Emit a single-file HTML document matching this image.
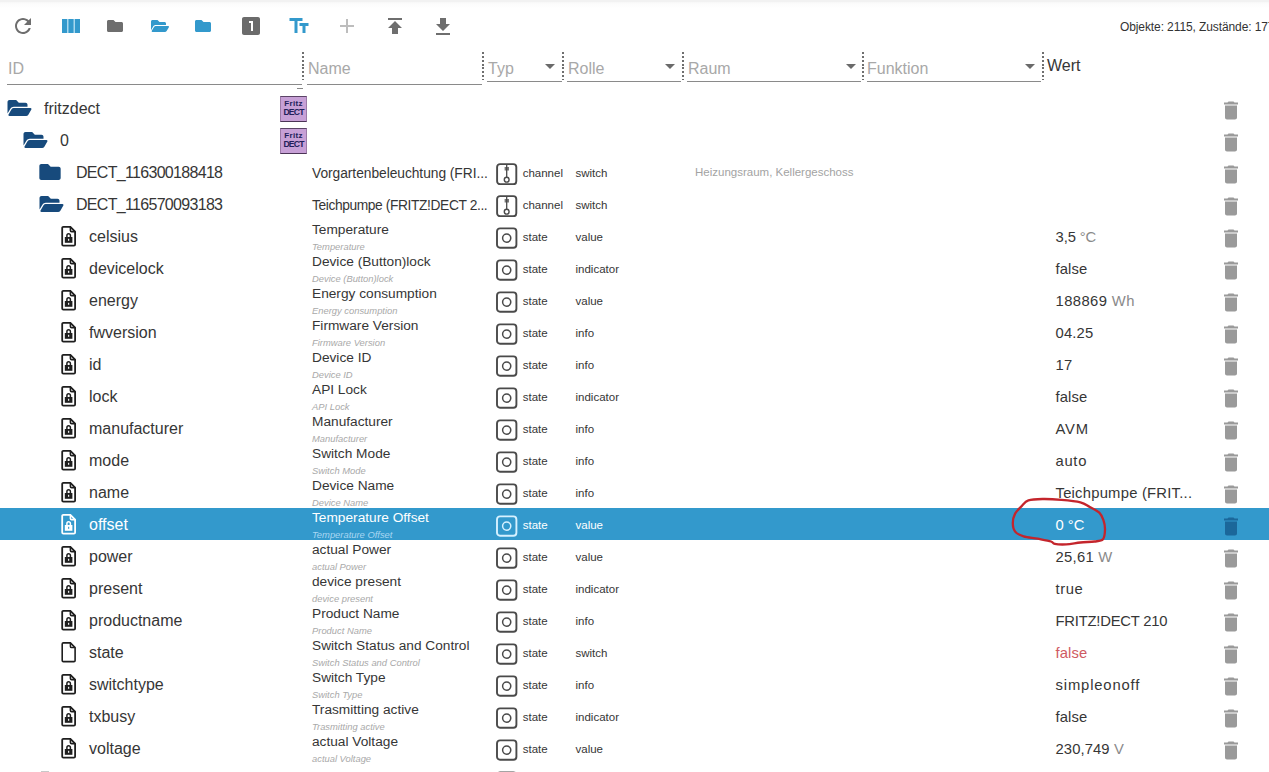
<!DOCTYPE html>
<html><head><meta charset="utf-8"><style>
*{box-sizing:border-box}
html,body{margin:0;padding:0}
body{width:1269px;height:772px;overflow:hidden;background:#fff;position:relative;font-family:"Liberation Sans",sans-serif;color:#222}
.topsh{position:absolute;left:0;top:0;width:1269px;height:8px;background:linear-gradient(#f2f2f2 0,#f2f2f2 1.6px,#f9f9f9 2.6px,#fcfcfc 4px,#fdfdfd 6px,#fff 8px)}
.tb{position:absolute}
.stats{position:absolute;left:1120px;top:19.5px;font-size:12px;color:#333;white-space:nowrap;letter-spacing:-0.1px}
.flt{position:absolute;top:52px;height:33px;border-bottom:1px solid #8a8a8a}
.flt.s{height:30px}
.ph{position:absolute;font-size:16px;color:#a8a8a8;white-space:nowrap;top:60px}
.sep{position:absolute;top:52px;width:2px;height:28px;background:repeating-linear-gradient(#6f6f6f 0 2px,transparent 2px 3.85px)}
.arr{position:absolute;top:64px;width:0;height:0;border-left:5px solid transparent;border-right:5px solid transparent;border-top:5px solid #6a6a6a}
.wertH{position:absolute;left:1047px;top:57px;font-size:16px;color:#363636}
.row{position:absolute;left:0;width:1269px;height:32px}
.row.sel{background:#3399cc;color:#fff}
.ic{position:absolute}
.folder{fill:#174a7c}
.file{color:#1e1e1e}
.sel .file{color:#fff;--kh:#3399cc}
.idt{position:absolute;top:7px;font-size:16px;line-height:20px;white-space:nowrap;color:#363636}
.sel .idt{color:#fff}
.fritz{position:absolute;left:280px;top:4px;width:27px;height:26px;background:#c7a0d6;border-top:1px solid #5b4466;border-bottom:1.5px solid #4b3456;border-left:1px solid #9c7aa8;border-right:1px solid #9c7aa8;font-family:"Liberation Sans",sans-serif;font-weight:bold;font-size:8px;line-height:8px;color:#22205a;text-align:center}
.fritz span{position:absolute;left:0;width:25px;display:block}.fritz .f1{top:3.2px;letter-spacing:0.3px}.fritz .f2{top:11px;font-size:8.6px;letter-spacing:-0.8px}
.nm{position:absolute;left:312px;top:2px;font-size:13.7px;line-height:16px;white-space:nowrap;color:#363636}
.nm1{position:absolute;left:312px;top:10px;font-size:13.8px;line-height:16px;white-space:nowrap;color:#363636}
.sub{position:absolute;left:312px;top:21px;font-size:9.4px;line-height:11px;font-style:italic;white-space:nowrap;color:#a9a9a9}
.sel .nm{color:#fff}
.sel .sub{color:#a9d7f2}
.tbox{left:495px;top:6px;color:#4a4a4a}
.sel .tbox{color:#d6f1ff}
.typ{position:absolute;left:522.7px;top:10px;font-size:11.5px;line-height:14px;white-space:nowrap;color:#363636}
.rol{position:absolute;left:575.5px;top:10px;font-size:11.5px;line-height:14px;white-space:nowrap;color:#363636}
.sel .typ,.sel .rol{color:#fff}
.raum{position:absolute;left:695px;top:10px;font-size:11.5px;line-height:13px;white-space:nowrap;color:#a3a3a3}
.wert{position:absolute;left:1055.5px;top:8px;font-size:14.8px;line-height:18px;white-space:nowrap;color:#363636}
.wert .unit{color:#8a8a8a}
.sel .wert,.sel .wert .unit{color:#fff}
.wert.red{color:#cf5a62}
.trash{left:1224px;top:9px;fill:#9a9a9a}
.sel .trash{fill:#1b679a}
.graymark{position:absolute;top:7px;width:8px;height:2px;background:#c8c8c8}

</style></head><body>
<svg width="0" height="0" style="position:absolute">
<defs>
<symbol id="fopen" viewBox="0 64 576 384"><path d="M572.694 292.093L500.27 416.248A63.997 63.997 0 0 1 444.989 448H45.025c-18.523 0-30.064-20.093-20.731-36.093l72.424-124.155A64 64 0 0 1 152 256h399.964c18.523 0 30.064 20.093 20.73 36.093zM152 224h328v-48c0-26.51-21.49-48-48-48H272l-64-64H48C21.49 64 0 85.49 0 112v278.046l69.077-118.418C86.214 242.25 117.989 224 152 224z"/></symbol>
<symbol id="fclosed" viewBox="0 64 512 384"><path d="M464 128H272l-64-64H48C21.49 64 0 85.49 0 112v288c0 26.51 21.49 48 48 48h416c26.51 0 48-21.49 48-48V176c0-26.51-21.49-48-48-48z"/></symbol>
<symbol id="lockf" viewBox="0 0 17 22"><path d="M2.2 3.1Q2.2 1.9 3.4 1.9H10.4L15.1 6.6V19.4Q15.1 20.6 13.9 20.6H3.4Q2.2 20.6 2.2 19.4Z" fill="none" stroke="currentColor" stroke-width="1.8"/><path d="M10.4 1.9V5.4Q10.4 6.6 11.6 6.6H15.1" fill="none" stroke="currentColor" stroke-width="1.6"/><path d="M6.9 12.2V10.4A1.75 1.75 0 0 1 10.4 10.4V12.2" fill="none" stroke="currentColor" stroke-width="1.5"/><rect x="4.8" y="12" width="7.6" height="5.8" fill="currentColor"/><rect x="8.1" y="13.8" width="1.1" height="2" fill="var(--kh,#fff)"/></symbol>
<symbol id="plainf" viewBox="0 0 17 22"><path d="M2.2 3.1Q2.2 1.9 3.4 1.9H10.4L15.1 6.6V19.4Q15.1 20.6 13.9 20.6H3.4Q2.2 20.6 2.2 19.4Z" fill="none" stroke="currentColor" stroke-width="1.6"/><path d="M10.4 1.9V5.4Q10.4 6.6 11.6 6.6H15.1" fill="none" stroke="currentColor" stroke-width="1.5"/></symbol>
<symbol id="stat" viewBox="0 0 23 23"><rect x="2" y="2.4" width="19.4" height="19.4" rx="3" fill="none" stroke="currentColor" stroke-width="1.9"/><circle cx="11.7" cy="12.1" r="4.1" fill="none" stroke="currentColor" stroke-width="1.5"/></symbol>
<symbol id="chan" viewBox="0 0 23 23"><rect x="2.1" y="2.1" width="19.2" height="20.2" rx="3" fill="none" stroke="currentColor" stroke-width="1.9"/><path d="M11.7 3V15.4" stroke="currentColor" stroke-width="1.3"/><rect x="9.6" y="5" width="4.4" height="3.5" fill="currentColor" opacity="0.75"/><circle cx="11.7" cy="17.7" r="2.4" fill="none" stroke="currentColor" stroke-width="1.4"/></symbol>
<symbol id="trash" viewBox="5 3 14 18"><path d="M6 19c0 1.1.9 2 2 2h8c1.1 0 2-.9 2-2V7H6v12zM19 4h-3.5l-1-1h-5l-1 1H5v2h14V4z"/></symbol>
</defs>
</svg>

<div class="topsh"></div>
<svg class="tb" style="left:11px;top:14px" width="24" height="24" viewBox="0 0 24 24"><path fill="#6e6e6e" d="M17.65 6.35C16.2 4.9 14.21 4 12 4c-4.42 0-7.99 3.58-7.99 8s3.57 8 7.99 8c3.73 0 6.84-2.55 7.73-6h-2.08c-.82 2.33-3.04 4-5.65 4-3.31 0-6-2.69-6-6s2.69-6 6-6c1.66 0 3.14.69 4.22 1.78L13 11h7V4l-2.35 2.35z"/></svg>
<svg class="tb" style="left:62px;top:19px" width="18" height="14" viewBox="0 0 18 14"><rect width="18" height="14" fill="#a9d8ef"/><rect x="0" y="0" width="5" height="14" fill="#3399cc"/><rect x="6.5" y="0" width="5" height="14" fill="#3399cc"/><rect x="13" y="0" width="5" height="14" fill="#3399cc"/></svg>
<svg class="tb" style="left:107px;top:20px" width="16" height="12" fill="#6e6e6e"><use href="#fclosed"/></svg>
<svg class="tb" style="left:151px;top:20px" width="18" height="12" fill="#3399cc"><use href="#fopen"/></svg>
<svg class="tb" style="left:195px;top:20px" width="16" height="12" fill="#3399cc"><use href="#fclosed"/></svg>
<svg class="tb" style="left:239px;top:14px" width="24" height="24" viewBox="0 0 24 24"><path fill="#6b6b6b" d="M19 3H5c-1.1 0-2 .9-2 2v14c0 1.1.9 2 2 2h14c1.1 0 2-.9 2-2V5c0-1.1-.9-2-2-2zm-5 14h-2V9h-2V7h4v10z"/></svg>
<svg class="tb" style="left:286.5px;top:14px" width="24" height="24" viewBox="0 0 24 24"><path fill="#3399cc" d="M2.5 4v3h5v12h3V7h5V4h-13zm19 5h-9v3h3v7h3v-7h3V9z"/></svg>
<svg class="tb" style="left:335px;top:14px" width="24" height="24" viewBox="0 0 24 24"><path fill="#bdbdbd" d="M19 13h-6v6h-2v-6H5v-2h6V5h2v6h6v2z"/></svg>
<svg class="tb" style="left:383px;top:14px" width="24" height="24" viewBox="0 0 24 24"><path fill="#6e6e6e" d="M5 4v2h14V4H5zm0 10h4v6h6v-6h4l-7-7-7 7z"/></svg>
<svg class="tb" style="left:431px;top:15px" width="24" height="24" viewBox="0 0 24 24"><path fill="#6e6e6e" d="M19 9h-4V3H9v6H5l7 7 7-7zM5 18v2h14v-2H5z"/></svg>
<div class="stats">Objekte: 2115, Zustände: 1777</div>
<div class="flt" style="left:7px;width:295px"></div><div class="ph" style="left:8px">ID</div>
<div class="sep" style="left:302px"></div>
<div class="flt" style="left:307px;width:175px"></div><div class="ph" style="left:308px">Name</div>
<div class="sep" style="left:482px"></div>
<div class="flt s" style="left:487px;width:75px"></div><div class="ph" style="left:488px">Typ</div><div class="arr" style="left:545px"></div>
<div class="sep" style="left:562px"></div>
<div class="flt s" style="left:567px;width:114px"></div><div class="ph" style="left:568px">Rolle</div><div class="arr" style="left:665px"></div>
<div class="sep" style="left:682px"></div>
<div class="flt s" style="left:687px;width:174px"></div><div class="ph" style="left:688px">Raum</div><div class="arr" style="left:846px"></div>
<div class="sep" style="left:862px"></div>
<div class="flt s" style="left:867px;width:174px"></div><div class="ph" style="left:867px">Funktion</div><div class="arr" style="left:1025px"></div>
<div class="sep" style="left:1042px"></div>
<div class="wertH">Wert</div>
<div style="position:absolute;left:297px;top:88px;width:6px;height:1px;background:#888"></div>

<div class="row" style="top:92px"><svg class="ic folder" style="left:7px;top:8px" width="25" height="16"><use href="#fopen"/></svg><div class="idt" style="left:44px">fritzdect</div><div class="fritz"><span class="f1">Fritz</span><span class="f2">DECT</span></div><svg class="ic trash" width="14" height="19"><use href="#trash"/></svg></div>
<div class="row" style="top:124px"><svg class="ic folder" style="left:23px;top:8px" width="25" height="16"><use href="#fopen"/></svg><div class="idt" style="left:60px">0</div><div class="fritz"><span class="f1">Fritz</span><span class="f2">DECT</span></div><svg class="ic trash" width="14" height="19"><use href="#trash"/></svg></div>
<div class="row" style="top:156px"><svg class="ic folder" style="left:39px;top:8px" width="22" height="16"><use href="#fclosed"/></svg><div class="idt" style="left:76px;letter-spacing:-0.69px">DECT_116300188418</div><div class="nm1" style="letter-spacing:-0.05px">Vorgartenbeleuchtung (FRI...</div><svg class="ic tbox" width="23" height="23"><use href="#chan"/></svg><div class="typ">channel</div><div class="rol">switch</div><div class="raum">Heizungsraum, Kellergeschoss</div><svg class="ic trash" width="14" height="19"><use href="#trash"/></svg></div>
<div class="row" style="top:188px"><svg class="ic folder" style="left:39px;top:8px" width="25" height="16"><use href="#fopen"/></svg><div class="idt" style="left:76px;letter-spacing:-0.69px">DECT_116570093183</div><div class="nm1" style="letter-spacing:-0.4px">Teichpumpe (FRITZ!DECT 2...</div><svg class="ic tbox" width="23" height="23"><use href="#chan"/></svg><div class="typ">channel</div><div class="rol">switch</div><svg class="ic trash" width="14" height="19"><use href="#trash"/></svg></div>
<div class="row" style="top:220px"><svg class="ic file" style="left:60px;top:5px" width="17" height="22"><use href="#lockf"/></svg><div class="idt" style="left:89px">celsius</div><div class="nm">Temperature</div><div class="sub">Temperature</div><svg class="ic tbox" width="23" height="23"><use href="#stat"/></svg><div class="typ">state</div><div class="rol">value</div><div class="wert" style="letter-spacing:-0.1px">3,5 <span class="unit">°C</span></div><svg class="ic trash" width="14" height="19"><use href="#trash"/></svg></div>
<div class="row" style="top:252px"><svg class="ic file" style="left:60px;top:5px" width="17" height="22"><use href="#lockf"/></svg><div class="idt" style="left:89px">devicelock</div><div class="nm">Device (Button)lock</div><div class="sub">Device (Button)lock</div><svg class="ic tbox" width="23" height="23"><use href="#stat"/></svg><div class="typ">state</div><div class="rol">indicator</div><div class="wert" style="letter-spacing:0.1px">false</div><svg class="ic trash" width="14" height="19"><use href="#trash"/></svg></div>
<div class="row" style="top:284px"><svg class="ic file" style="left:60px;top:5px" width="17" height="22"><use href="#lockf"/></svg><div class="idt" style="left:89px">energy</div><div class="nm">Energy consumption</div><div class="sub">Energy consumption</div><svg class="ic tbox" width="23" height="23"><use href="#stat"/></svg><div class="typ">state</div><div class="rol">value</div><div class="wert" style="letter-spacing:0.4px">188869 <span class="unit">Wh</span></div><svg class="ic trash" width="14" height="19"><use href="#trash"/></svg></div>
<div class="row" style="top:316px"><svg class="ic file" style="left:60px;top:5px" width="17" height="22"><use href="#lockf"/></svg><div class="idt" style="left:89px">fwversion</div><div class="nm">Firmware Version</div><div class="sub">Firmware Version</div><svg class="ic tbox" width="23" height="23"><use href="#stat"/></svg><div class="typ">state</div><div class="rol">info</div><div class="wert" style="letter-spacing:0.15px">04.25</div><svg class="ic trash" width="14" height="19"><use href="#trash"/></svg></div>
<div class="row" style="top:348px"><svg class="ic file" style="left:60px;top:5px" width="17" height="22"><use href="#lockf"/></svg><div class="idt" style="left:89px">id</div><div class="nm">Device ID</div><div class="sub">Device ID</div><svg class="ic tbox" width="23" height="23"><use href="#stat"/></svg><div class="typ">state</div><div class="rol">info</div><div class="wert" style="letter-spacing:0.3px">17</div><svg class="ic trash" width="14" height="19"><use href="#trash"/></svg></div>
<div class="row" style="top:380px"><svg class="ic file" style="left:60px;top:5px" width="17" height="22"><use href="#lockf"/></svg><div class="idt" style="left:89px">lock</div><div class="nm">API Lock</div><div class="sub">API Lock</div><svg class="ic tbox" width="23" height="23"><use href="#stat"/></svg><div class="typ">state</div><div class="rol">indicator</div><div class="wert" style="letter-spacing:0.1px">false</div><svg class="ic trash" width="14" height="19"><use href="#trash"/></svg></div>
<div class="row" style="top:412px"><svg class="ic file" style="left:60px;top:5px" width="17" height="22"><use href="#lockf"/></svg><div class="idt" style="left:89px">manufacturer</div><div class="nm">Manufacturer</div><div class="sub">Manufacturer</div><svg class="ic tbox" width="23" height="23"><use href="#stat"/></svg><div class="typ">state</div><div class="rol">info</div><div class="wert" style="letter-spacing:0.8px">AVM</div><svg class="ic trash" width="14" height="19"><use href="#trash"/></svg></div>
<div class="row" style="top:444px"><svg class="ic file" style="left:60px;top:5px" width="17" height="22"><use href="#lockf"/></svg><div class="idt" style="left:89px">mode</div><div class="nm">Switch Mode</div><div class="sub">Switch Mode</div><svg class="ic tbox" width="23" height="23"><use href="#stat"/></svg><div class="typ">state</div><div class="rol">info</div><div class="wert" style="letter-spacing:0.7px">auto</div><svg class="ic trash" width="14" height="19"><use href="#trash"/></svg></div>
<div class="row" style="top:476px"><svg class="ic file" style="left:60px;top:5px" width="17" height="22"><use href="#lockf"/></svg><div class="idt" style="left:89px">name</div><div class="nm">Device Name</div><div class="sub">Device Name</div><svg class="ic tbox" width="23" height="23"><use href="#stat"/></svg><div class="typ">state</div><div class="rol">info</div><div class="wert" style="letter-spacing:0.23px">Teichpumpe (FRIT...</div><svg class="ic trash" width="14" height="19"><use href="#trash"/></svg></div>
<div class="row sel" style="top:508px"><svg class="ic file" style="left:60px;top:5px" width="17" height="22"><use href="#lockf"/></svg><div class="idt" style="left:89px">offset</div><div class="nm">Temperature Offset</div><div class="sub">Temperature Offset</div><svg class="ic tbox" width="23" height="23"><use href="#stat"/></svg><div class="typ">state</div><div class="rol">value</div><div class="wert">0 <span class="unit">°C</span></div><svg class="ic trash" width="14" height="19"><use href="#trash"/></svg></div>
<div class="row" style="top:540px"><svg class="ic file" style="left:60px;top:5px" width="17" height="22"><use href="#lockf"/></svg><div class="idt" style="left:89px">power</div><div class="nm">actual Power</div><div class="sub">actual Power</div><svg class="ic tbox" width="23" height="23"><use href="#stat"/></svg><div class="typ">state</div><div class="rol">value</div><div class="wert" style="letter-spacing:0.27px">25,61 <span class="unit">W</span></div><svg class="ic trash" width="14" height="19"><use href="#trash"/></svg></div>
<div class="row" style="top:572px"><svg class="ic file" style="left:60px;top:5px" width="17" height="22"><use href="#lockf"/></svg><div class="idt" style="left:89px">present</div><div class="nm">device present</div><div class="sub">device present</div><svg class="ic tbox" width="23" height="23"><use href="#stat"/></svg><div class="typ">state</div><div class="rol">indicator</div><div class="wert" style="letter-spacing:0.6px">true</div><svg class="ic trash" width="14" height="19"><use href="#trash"/></svg></div>
<div class="row" style="top:604px"><svg class="ic file" style="left:60px;top:5px" width="17" height="22"><use href="#lockf"/></svg><div class="idt" style="left:89px">productname</div><div class="nm">Product Name</div><div class="sub">Product Name</div><svg class="ic tbox" width="23" height="23"><use href="#stat"/></svg><div class="typ">state</div><div class="rol">info</div><div class="wert" style="letter-spacing:-0.22px">FRITZ!DECT 210</div><svg class="ic trash" width="14" height="19"><use href="#trash"/></svg></div>
<div class="row" style="top:636px"><svg class="ic file" style="left:60px;top:5px" width="17" height="22"><use href="#plainf"/></svg><div class="idt" style="left:89px">state</div><div class="nm">Switch Status and Control</div><div class="sub">Switch Status and Control</div><svg class="ic tbox" width="23" height="23"><use href="#stat"/></svg><div class="typ">state</div><div class="rol">switch</div><div class="wert red" style="letter-spacing:0.1px">false</div><svg class="ic trash" width="14" height="19"><use href="#trash"/></svg></div>
<div class="row" style="top:668px"><svg class="ic file" style="left:60px;top:5px" width="17" height="22"><use href="#lockf"/></svg><div class="idt" style="left:89px">switchtype</div><div class="nm">Switch Type</div><div class="sub">Switch Type</div><svg class="ic tbox" width="23" height="23"><use href="#stat"/></svg><div class="typ">state</div><div class="rol">info</div><div class="wert" style="letter-spacing:0.85px">simpleonoff</div><svg class="ic trash" width="14" height="19"><use href="#trash"/></svg></div>
<div class="row" style="top:700px"><svg class="ic file" style="left:60px;top:5px" width="17" height="22"><use href="#lockf"/></svg><div class="idt" style="left:89px">txbusy</div><div class="nm">Trasmitting active</div><div class="sub">Trasmitting active</div><svg class="ic tbox" width="23" height="23"><use href="#stat"/></svg><div class="typ">state</div><div class="rol">indicator</div><div class="wert" style="letter-spacing:0.1px">false</div><svg class="ic trash" width="14" height="19"><use href="#trash"/></svg></div>
<div class="row" style="top:732px"><svg class="ic file" style="left:60px;top:5px" width="17" height="22"><use href="#lockf"/></svg><div class="idt" style="left:89px">voltage</div><div class="nm">actual Voltage</div><div class="sub">actual Voltage</div><svg class="ic tbox" width="23" height="23"><use href="#stat"/></svg><div class="typ">state</div><div class="rol">value</div><div class="wert" style="letter-spacing:0.1px">230,749 <span class="unit">V</span></div><svg class="ic trash" width="14" height="19"><use href="#trash"/></svg></div>
<div class="row" style="top:764px"><div class="graymark" style="left:41px"></div><svg class="ic tbox" width="23" height="23"><use href="#stat"/></svg></div>
<svg style="position:absolute;left:0;top:0" width="1269" height="772"><path d="M1028.4 500.4C1031.9 499.2 1037.1 499.1 1042.6 499.0C1048.1 498.9 1055.2 499.3 1061.5 499.9C1067.8 500.4 1075.7 501.1 1080.4 502.3C1085.1 503.5 1086.7 505.3 1089.8 507.0C1092.9 508.7 1097.0 510.5 1099.3 512.7C1101.6 514.9 1102.5 517.5 1103.5 520.3C1104.5 523.1 1105.1 526.6 1105.0 529.7C1104.9 532.9 1104.7 537.2 1103.0 539.2C1101.3 541.2 1098.4 541.0 1094.6 541.5C1090.8 542.0 1085.1 542.0 1080.4 542.5C1075.7 543.0 1070.5 544.2 1066.2 544.4C1061.9 544.6 1057.3 544.4 1054.8 543.9C1052.3 543.4 1053.8 542.4 1051.0 541.5C1048.2 540.6 1042.4 539.6 1037.8 538.7C1033.2 537.8 1027.4 537.5 1023.6 536.3C1019.8 535.1 1016.9 533.8 1015.1 531.6C1013.3 529.4 1012.8 526.1 1012.8 523.1C1012.8 520.1 1013.6 516.4 1015.1 513.6C1016.6 510.8 1019.5 508.3 1021.7 506.1C1023.9 503.9 1024.9 501.6 1028.4 500.4" fill="none" stroke="#c4252c" stroke-width="2.3" stroke-linecap="round" stroke-linejoin="round"/></svg>
</body></html>
